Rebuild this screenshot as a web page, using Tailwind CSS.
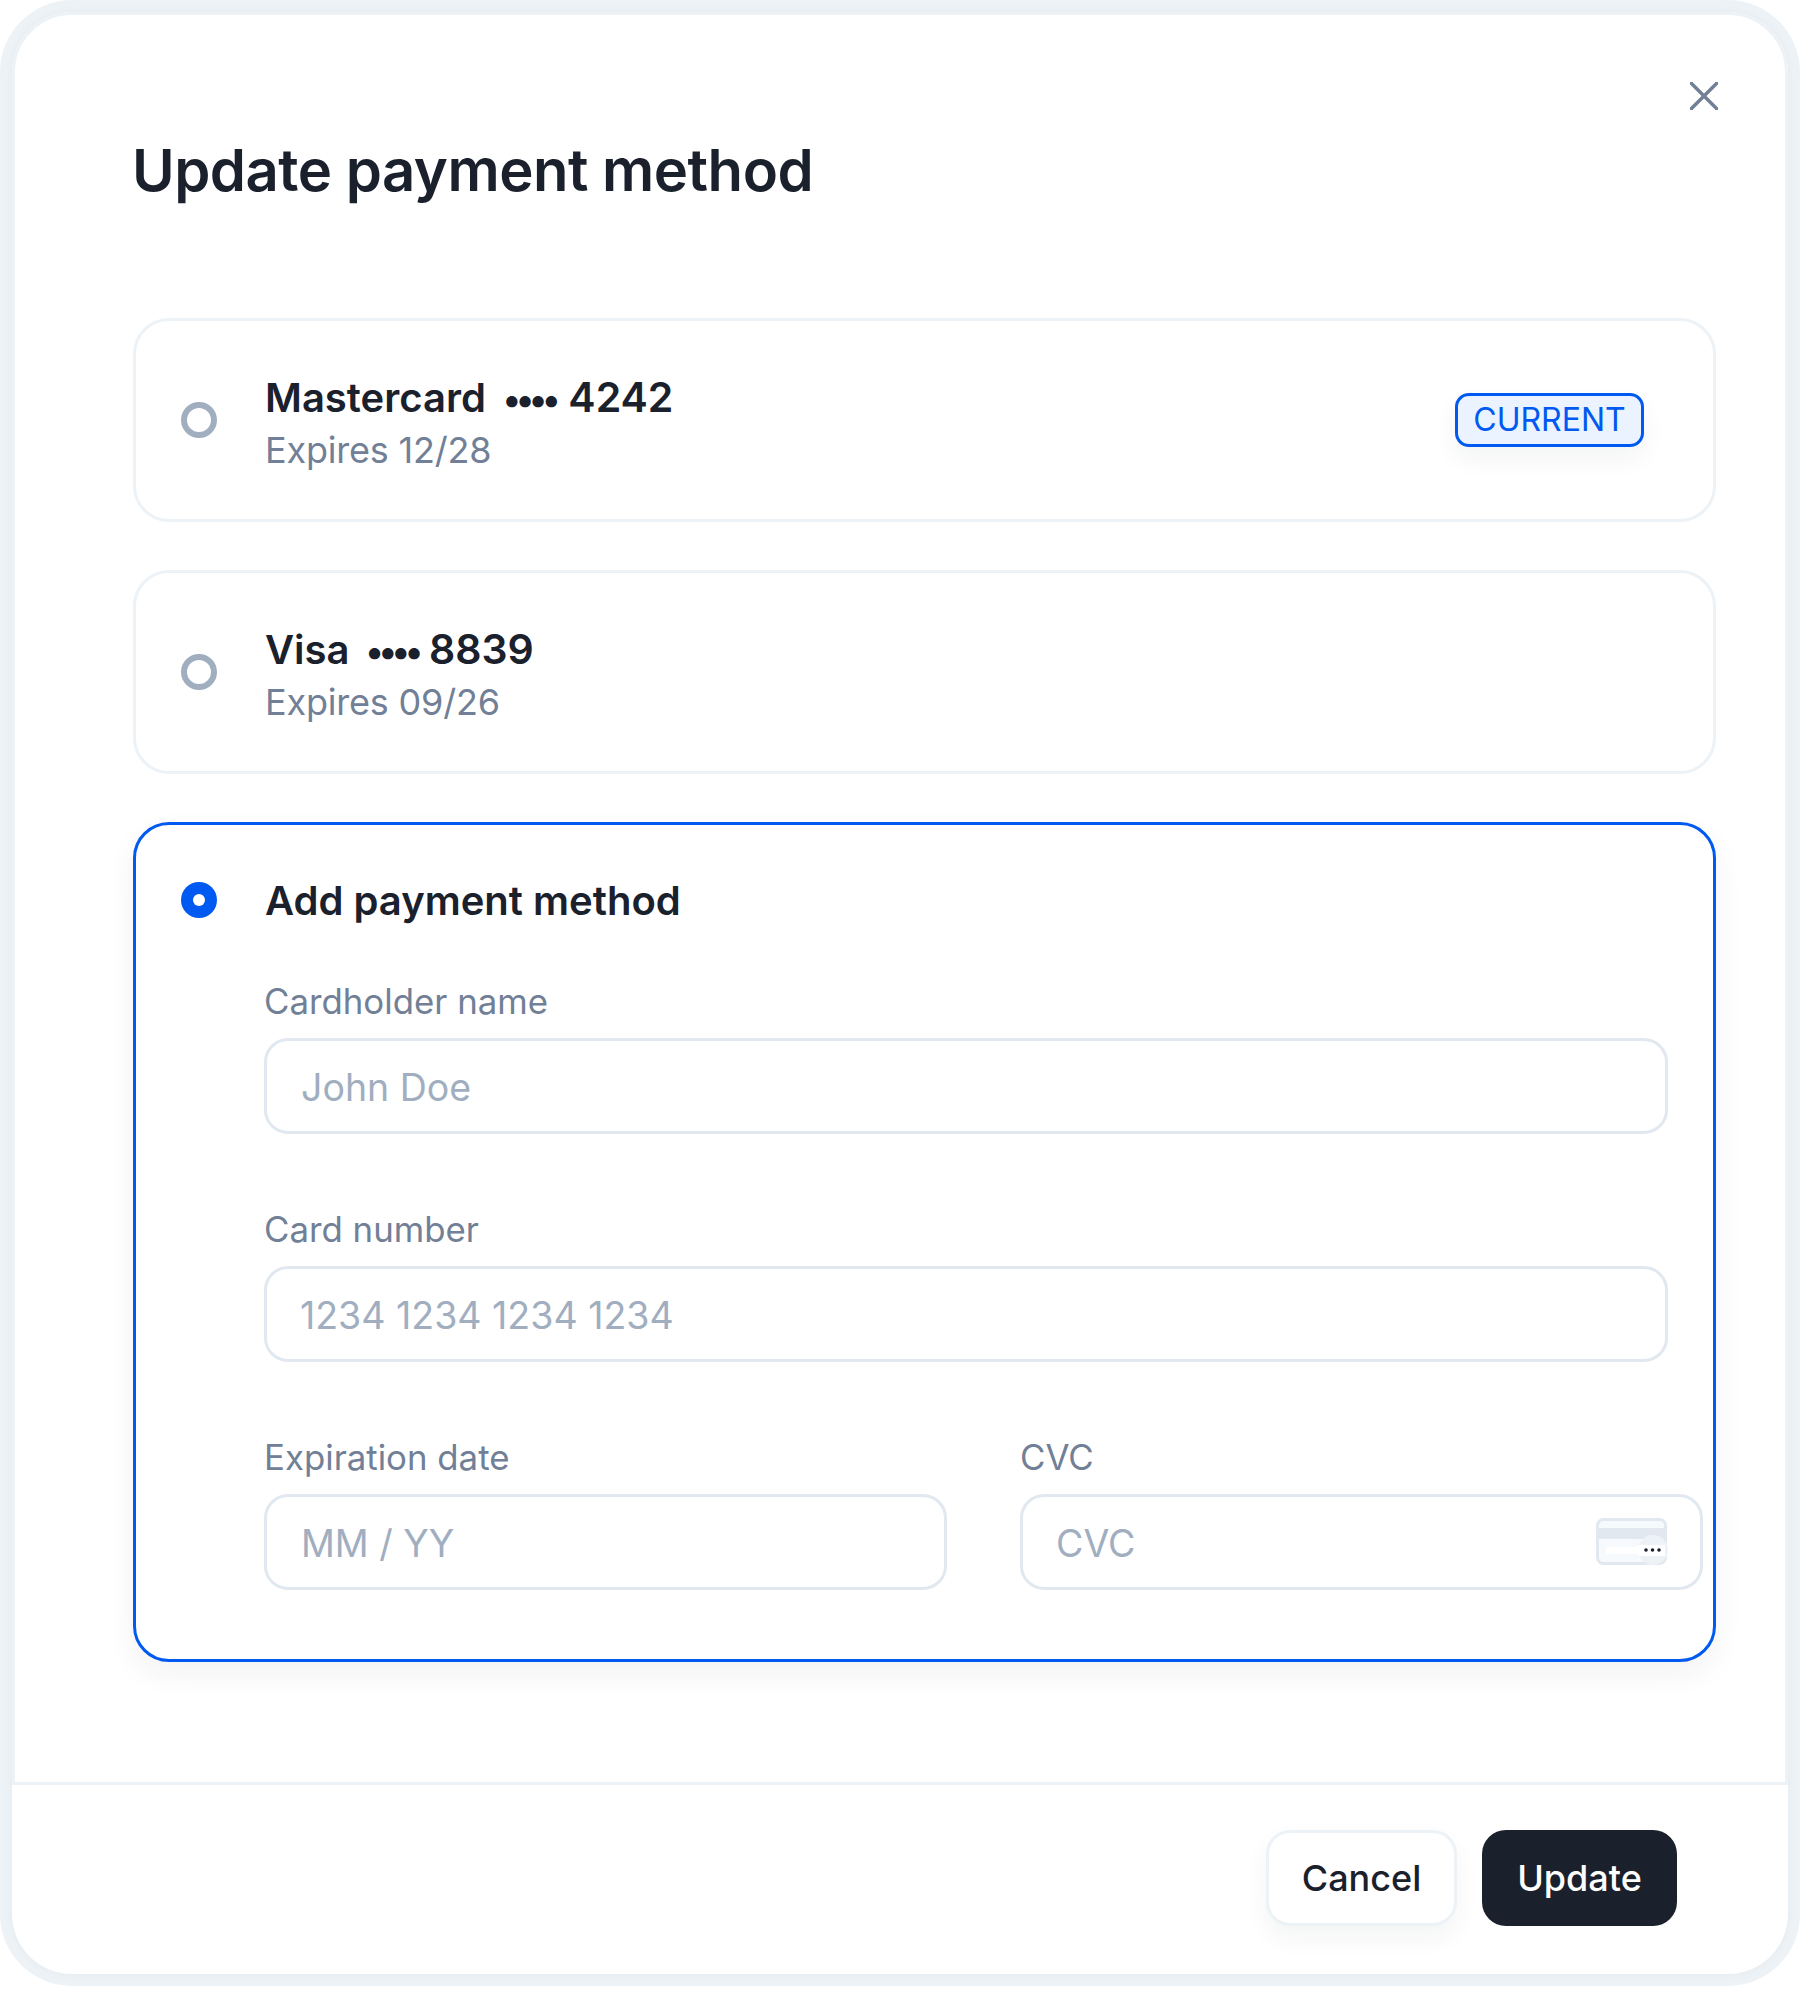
<!DOCTYPE html>
<html lang="en">
<head>
  <meta charset="UTF-8" />
  <meta name="viewport" content="width=device-width, initial-scale=1.0" />
  <title>Update payment method</title>
  <script src="https://cdn.jsdelivr.net/npm/@tailwindcss/browser@4"></script>
</head>
<body class="bg-white font-['Inter',sans-serif] text-[#1a202c]">

  <!-- Modal -->
  <div class="w-[1800px] h-[1986px] bg-[#edf2f7] rounded-[72px] p-[12px]">
    <div class="relative h-full bg-white rounded-[60px] flex flex-col overflow-hidden shadow-[0_0_8px_rgba(26,32,44,0.04)]">

      <!-- Close -->
      <button class="absolute left-[1678px] top-[70px] w-[28px] h-[28px] text-[#718096]">
        <svg viewBox="0 0 28 28" fill="none" stroke="currentColor" stroke-width="3.5" stroke-linecap="round" class="w-full h-full">
          <path d="M1 1 L27 27 M27 1 L1 27" />
        </svg>
      </button>

      <!-- Body -->
      <section class="h-[1773px] border-[3px] border-[#edf2f7] rounded-t-[60px] pt-[120px] pl-[118px] pr-[69px]">
        <h1 class="text-[58px] leading-[70px] font-semibold tracking-[-0.5px] -ml-[1px] mb-[113px]">Update payment method</h1>

        <div class="flex flex-col gap-[48px]">
          <!-- Mastercard -->
          <div class="h-[204px] border-[3px] border-[#edf2f7] rounded-[36px] pl-[45px] pr-[69px] flex items-center">
            <span class="w-[36px] h-[36px] rounded-full border-[6px] border-[#a0aec0] mr-[48px]"></span>
            <div class="flex-1 pt-[7px]">
              <div class="flex items-baseline text-[40px] leading-[54px] font-semibold">
                <span>Mastercard</span>
                <span class="ml-[17px] text-[36px] tracking-[-5px]">••••</span>
                <span class="ml-[13px] text-[41px]">4242</span>
              </div>
              <div class="-mt-[3px] text-[36px] leading-[54px] tracking-[-0.2px] text-[#718096]">Expires 12/28</div>
            </div>
            <span class="w-[189px] h-[54px] flex items-center justify-center rounded-[14px] border-[3px] border-[#0059f0] bg-[#eaf3ff] text-[#0059f0] text-[32px] shadow-[0_12px_24px_rgba(26,32,44,0.05)]">CURRENT</span>
          </div>

          <!-- Visa -->
          <div class="h-[204px] border-[3px] border-[#edf2f7] rounded-[36px] pl-[45px] pr-[69px] flex items-center">
            <span class="w-[36px] h-[36px] rounded-full border-[6px] border-[#a0aec0] mr-[48px]"></span>
            <div class="flex-1 pt-[7px]">
              <div class="flex items-baseline text-[40px] leading-[54px] font-semibold">
                <span>Visa</span>
                <span class="ml-[16px] text-[36px] tracking-[-5px]">••••</span>
                <span class="ml-[11px] text-[41px]">8839</span>
              </div>
              <div class="-mt-[3px] text-[36px] leading-[54px] tracking-[-0.2px] text-[#718096]">Expires 09/26</div>
            </div>
          </div>

          <!-- Add payment method -->
          <div class="h-[840px] border-[3px] border-[#0059f0] rounded-[36px] pl-[45px] pt-[48px] shadow-[0_12px_30px_rgba(26,32,44,0.06)]">
            <div class="flex items-center h-[54px]">
              <span class="w-[36px] h-[36px] rounded-full bg-[#0059f0] flex items-center justify-center mr-[48px]">
                <span class="w-[12px] h-[12px] rounded-full bg-white"></span>
              </span>
              <span class="pt-[1px] text-[40px] font-semibold">Add payment method</span>
            </div>

            <div class="ml-[83px] w-[1404px]">
              <div class="mt-[50px]">
                <label class="block text-[34.8px] leading-[48px] text-[#718096] mb-[13px]">Cardholder name</label>
                <div class="h-[96px] border-[3px] border-[#e2e8f0] rounded-[24px] pl-[34px] pt-[5px] flex items-center text-[37.5px] text-[#a0aec0]">John Doe</div>
              </div>
              <div class="mt-[71px]">
                <label class="block text-[34.8px] leading-[48px] text-[#718096] mb-[13px]">Card number</label>
                <div class="h-[96px] border-[3px] border-[#e2e8f0] rounded-[24px] pl-[33px] pt-[5px] flex items-center text-[37.5px] text-[#a0aec0]">1234 1234 1234 1234</div>
              </div>
              <div class="mt-[71px] grid grid-cols-[683px_683px] gap-[73px]">
                <div>
                  <label class="block text-[34.8px] leading-[48px] text-[#718096] mb-[13px]">Expiration date</label>
                  <div class="h-[96px] border-[3px] border-[#e2e8f0] rounded-[24px] pl-[34px] pt-[5px] flex items-center text-[37.5px] text-[#a0aec0]">MM / YY</div>
                </div>
                <div>
                  <label class="block text-[34.8px] leading-[48px] text-[#718096] mb-[13px]">CVC</label>
                  <div class="h-[96px] border-[3px] border-[#e2e8f0] rounded-[24px] pl-[33px] pr-[32px] flex items-center justify-between text-[37.5px] text-[#a0aec0]">
                    <span class="pt-[5px]">CVC</span>
                    <svg width="72" height="48" viewBox="0 0 72 48" fill="none">
                      <rect x="1.5" y="1.5" width="68" height="44" rx="6" fill="#f7fafc" stroke="#e2e8f0" stroke-width="3" />
                      <rect x="3" y="10" width="65" height="11" fill="#e2e8f0" />
                      <rect x="10" y="29" width="32" height="7" fill="#ffffff" />
                      <circle cx="57" cy="32" r="15" fill="#edf2f7" />
                      <rect x="42" y="27" width="27" height="11" fill="#ffffff" />
                      <circle cx="50" cy="32" r="1.8" fill="#1a202c" />
                      <circle cx="56.5" cy="32" r="1.8" fill="#1a202c" />
                      <circle cx="63" cy="32" r="1.8" fill="#1a202c" />
                    </svg>
                  </div>
                </div>
              </div>
            </div>
          </div>
        </div>
      </section>

      <!-- Footer -->
      <footer class="flex-1 flex justify-end gap-[25px] pt-[45px] pr-[111px]">
        <button class="w-[191px] h-[96px] bg-white border-[3px] border-[#edf2f7] rounded-[24px] text-[36px] font-medium shadow-[0_12px_24px_rgba(26,32,44,0.05)]">Cancel</button>
        <button class="w-[195px] h-[96px] bg-[#1a202c] text-white rounded-[24px] text-[36px] font-medium">Update</button>
      </footer>
    </div>
  </div>

</body>
</html>
